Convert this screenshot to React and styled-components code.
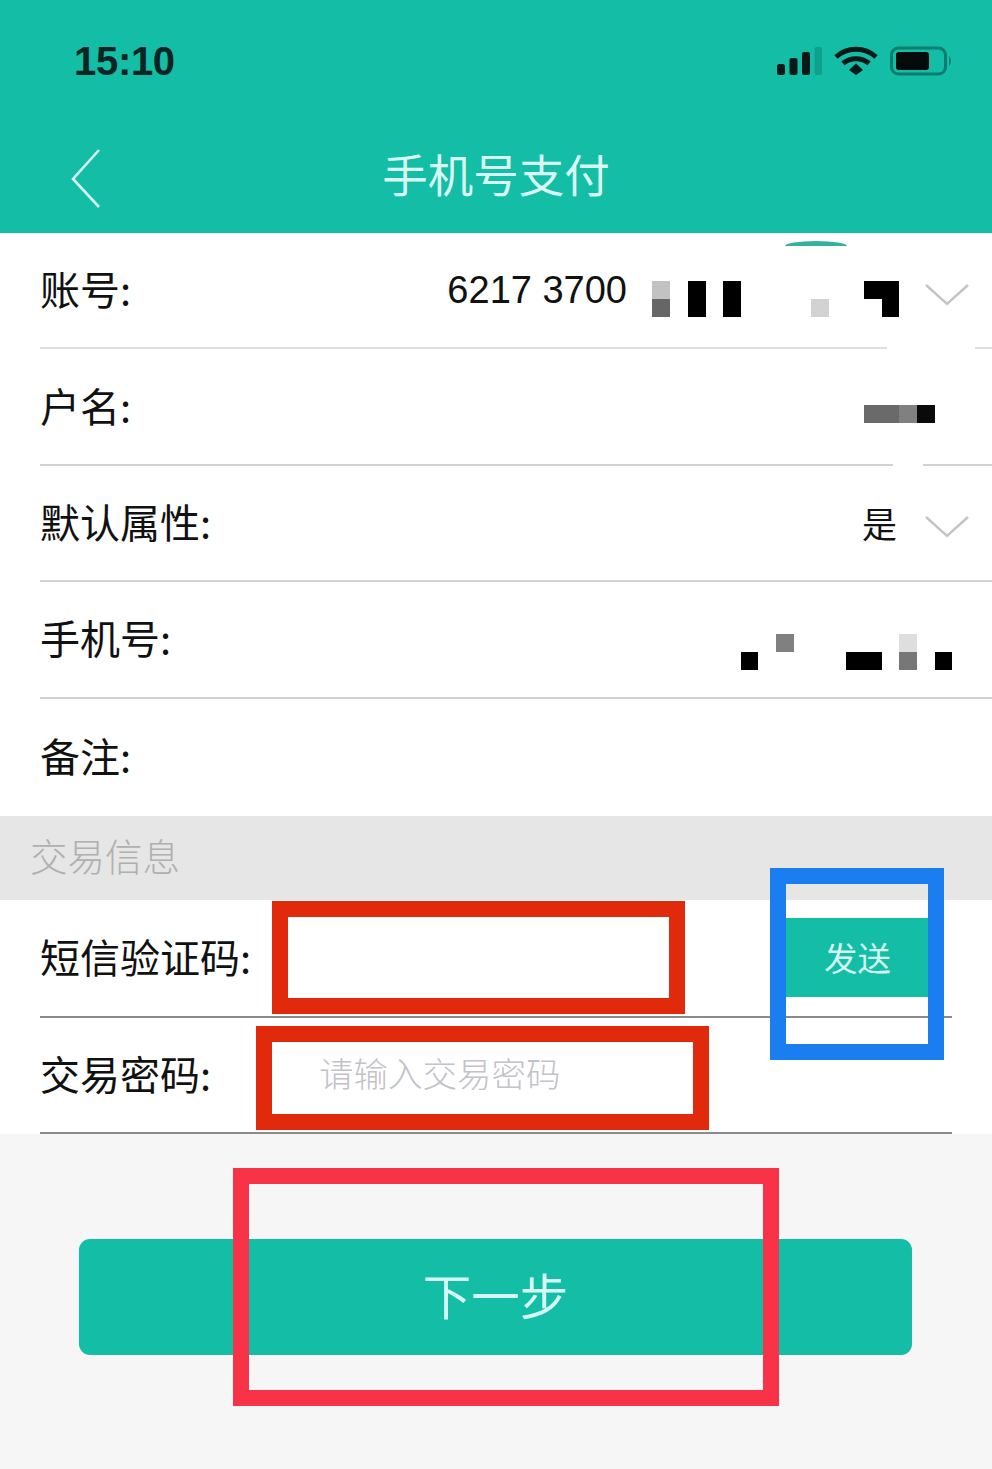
import React from 'react'
import styled, { createGlobalStyle } from 'styled-components'

const teal = '#14bda5'
const cjk = '"Noto Sans CJK SC", "Liberation Sans", sans-serif'

const GlobalStyle = createGlobalStyle`
  html, body {
    margin: 0;
    padding: 0;
    background: #f6f6f6;
  }
  * {
    box-sizing: border-box;
  }
`

const Page = styled.div`
  position: relative;
  width: 992px;
  height: 1469px;
  overflow: hidden;
  display: flex;
  flex-direction: column;
  background: #f6f6f6;
  font-family: ${cjk};
`

const Header = styled.header`
  height: 233px;
  flex: none;
  background: ${teal};
  display: flex;
  flex-direction: column;
`

const StatusBar = styled.div`
  height: 122px;
  padding: 38px 38px 0 74px;
  display: flex;
  justify-content: space-between;
  align-items: flex-start;
`

const Clock = styled.div`
  font-family: "Liberation Sans", Arial, sans-serif;
  font-size: 40px;
  line-height: 46px;
  font-weight: 700;
  letter-spacing: -0.3px;
  color: #0c2422;
`

const StatusIcons = styled.svg`
  display: block;
  margin-top: 8px;
`

const NavBar = styled.div`
  position: relative;
  flex: 1;
  display: flex;
  align-items: center;
  justify-content: center;
  padding-bottom: 10px;
`

const BackIcon = styled.svg`
  position: absolute;
  left: 70px;
  top: 27px;
`

const Title = styled.h1`
  margin: 0;
  font-size: 45.5px;
  font-weight: 400;
  line-height: 56px;
  color: #d9f8f2;
`

const Card = styled.section`
  flex: none;
  background: #fff;
`

const Row = styled.div`
  position: relative;
  height: ${p => p.$height || 116.4}px;
  margin-left: 40px;
  padding-right: ${p => p.$pad || 0}px;
  display: flex;
  align-items: center;
  border-bottom: ${p => (p.$plain ? 'none' : `2px solid ${p.$line || '#dedede'}`)};
  margin-right: ${p => p.$inset || 0}px;
`

const Label = styled.span`
  flex: none;
  width: ${p => (p.$width ? `${p.$width}px` : 'auto')};
  padding-bottom: 4px;
  font-size: 40px;
  font-weight: 400;
  line-height: 50px;
  color: #111;
`

const Account = styled.span`
  margin-left: auto;
  font-family: "Liberation Sans", Arial, sans-serif;
  font-size: 38px;
  color: #111;
`

const Value = styled.span`
  margin-left: auto;
  font-size: 35px;
  line-height: 44px;
  color: #111;
`

const MosaicSvg = styled.svg`
  display: block;
  flex: none;
  margin-left: ${p => p.$gap || 'auto'};
  margin-top: ${p => p.$drop}px;
`

const Chevron = styled.svg`
  display: block;
  flex: none;
  margin-left: ${p => p.$gap}px;
  margin-top: ${p => p.$drop}px;
`

const Patch = styled.i`
  position: absolute;
  bottom: -3px;
  left: ${p => p.$left}px;
  width: ${p => p.$width}px;
  height: 5px;
  background: #fff;
`

const Blip = styled.i`
  position: absolute;
  left: 745px;
  top: 8px;
  width: 62px;
  height: 5px;
  border-radius: 50% 50% 0 0 / 100% 100% 0 0;
  background: #2fb29e;
`

const SectionBar = styled.div`
  height: 84px;
  flex: none;
  padding: 0 0 6px 30px;
  display: flex;
  align-items: center;
  background: #e6e6e6;
  font-size: 37.5px;
  font-weight: 300;
  color: #b0b0b0;
`

const FieldInput = styled.input`
  flex: 1;
  min-width: 0;
  border: 0;
  outline: 0;
  padding: 0 0 6px;
  background: transparent;
  font-family: ${cjk};
  font-size: 34.5px;
  font-weight: 300;
  color: #111;

  &::placeholder {
    color: #c2c2c8;
    opacity: 1;
  }
`

const SendButton = styled.button`
  flex: none;
  width: 165px;
  height: 79px;
  margin-right: 12px;
  border: 0;
  padding: 0 0 2px;
  background: ${teal};
  font-family: ${cjk};
  font-size: 33.5px;
  font-weight: 400;
  color: #d3f6f0;
`

const Footer = styled.div`
  flex: 1;
  padding: 105.5px 80px 0 79px;
`

const NextButton = styled.button`
  display: block;
  width: 100%;
  height: 116px;
  border: 0;
  padding: 0 0 6px;
  border-radius: 11px;
  background: ${teal};
  font-family: ${cjk};
  font-size: 48.5px;
  font-weight: 400;
  color: #d6f9f3;
`

// annotation frames lying over the screenshot
const Frame = styled.div`
  position: absolute;
  left: ${p => p.$left}px;
  top: ${p => p.$top}px;
  width: ${p => p.$width}px;
  height: ${p => p.$height}px;
  border: 16px solid ${p => p.$color};
  pointer-events: none;
`

const Mosaic = ({ width, cells, gap, drop }) => (
  <MosaicSvg width={width} height="36" viewBox={`0 0 ${width} 36`} $gap={gap} $drop={drop}>
    {cells.map(([x, y, w, h, fill]) => (
      <rect key={`${x}-${y}`} x={x} y={y} width={w} height={h} fill={fill} />
    ))}
  </MosaicSvg>
)

const Caret = ({ gap, drop }) => (
  <Chevron width="44" height="22" viewBox="0 0 44 22" $gap={gap} $drop={drop}>
    <path d="M1 1 L22 20 L43 1" fill="none" stroke="#c4c4c4" strokeWidth="2.4" />
  </Chevron>
)

const accountCells = [
  [0, 0, 18, 18, '#c2c2c2'],
  [0, 18, 18, 18, '#666'],
  [36, 0, 18, 36, '#000'],
  [71, 0, 18, 36, '#000'],
  [159, 18, 18, 18, '#d2d2d2'],
  [212, 0, 35, 18, '#000'],
  [230, 18, 17, 18, '#000'],
]

const nameCells = [
  [0, 0, 35, 18, '#6a6a6a'],
  [35, 0, 18, 18, '#808080'],
  [53, 0, 18, 18, '#0a0a0a'],
]

const phoneCells = [
  [0, 18, 17, 18, '#000'],
  [35, 0, 18, 18, '#808080'],
  [105, 18, 36, 18, '#000'],
  [158, 0, 18, 18, '#dedede'],
  [158, 18, 18, 18, '#777'],
  [194, 18, 17, 18, '#000'],
]

export default function App() {
  return (
    <Page>
      <GlobalStyle />
      <Header>
        <StatusBar>
          <Clock>15:10</Clock>
          <StatusIcons width="178" height="30" viewBox="0 0 178 30">
            <rect x="1" y="18" width="8" height="11" rx="2.5" fill="#071a18" />
            <rect x="13.5" y="12" width="8" height="17" rx="2" fill="#071a18" />
            <rect x="26" y="6" width="8" height="23" rx="2" fill="#071a18" />
            <rect x="38.5" y="1" width="7.5" height="28" rx="2" fill="#10a08e" />
            <path d="M60 11 A30 30 0 0 1 100 11" fill="none" stroke="#071a18" strokeWidth="5" />
            <path d="M67 17.5 A20 20 0 0 1 93 17.5" fill="none" stroke="#071a18" strokeWidth="5" />
            <path d="M73 24 L80 17.5 L87 24 L80 29 Z" fill="#071a18" />
            <rect x="115.5" y="2" width="54" height="26" rx="7" fill="none" stroke="#0b7c70" strokeWidth="3" />
            <rect x="120" y="6" width="33" height="18" rx="3" fill="#050a0a" />
            <path d="M173 10 Q177 15 173 20 Z" fill="#0b7c70" />
          </StatusIcons>
        </StatusBar>
        <NavBar>
          <BackIcon width="32" height="60" viewBox="0 0 32 60">
            <path d="M29 1 L3 30 L29 58" fill="none" stroke="#d8f7f1" strokeWidth="2.6" />
          </BackIcon>
          <Title>手机号支付</Title>
        </NavBar>
      </Header>

      <Card>
        <Row $pad={23}>
          <Blip />
          <Label>账号:</Label>
          <Account>6217 3700</Account>
          <Mosaic width={247} cells={accountCells} gap="25px" drop={17} />
          <Caret gap={26} drop={10} />
          <Patch $left={847} $width={88} />
        </Row>
        <Row $line="#d2d2d2" $pad={57}>
          <Label>户名:</Label>
          <Mosaic width={71} cells={nameCells} drop={32} />
          <Patch $left={853} $width={30} />
        </Row>
        <Row $line="#d2d2d2" $pad={23}>
          <Label>默认属性:</Label>
          <Value>是</Value>
          <Caret gap={28} drop={8} />
        </Row>
        <Row $line="#d2d2d2" $pad={40}>
          <Label>手机号:</Label>
          <Mosaic width={211} cells={phoneCells} drop={26} />
        </Row>
        <Row $plain $height={117}>
          <Label>备注:</Label>
        </Row>
      </Card>

      <SectionBar>交易信息</SectionBar>

      <Card>
        <Row $line="#8a8a8a" $inset={40} $height={118}>
          <Label $width={279}>短信验证码:</Label>
          <FieldInput aria-label="短信验证码" />
          <SendButton>发送</SendButton>
        </Row>
        <Row $line="#8a8a8a" $inset={40} $height={116}>
          <Label $width={279}>交易密码:</Label>
          <FieldInput placeholder="请输入交易密码" />
        </Row>
      </Card>

      <Footer>
        <NextButton>下一步</NextButton>
      </Footer>

      <Frame $left={272} $top={901} $width={413} $height={113} $color="#e12a0c" />
      <Frame $left={256} $top={1026} $width={453} $height={104} $color="#e12a0c" />
      <Frame $left={770} $top={868} $width={174} $height={192} $color="#1a7df0" />
      <Frame $left={233} $top={1168} $width={546} $height={238} $color="#f93347" />
    </Page>
  )
}
